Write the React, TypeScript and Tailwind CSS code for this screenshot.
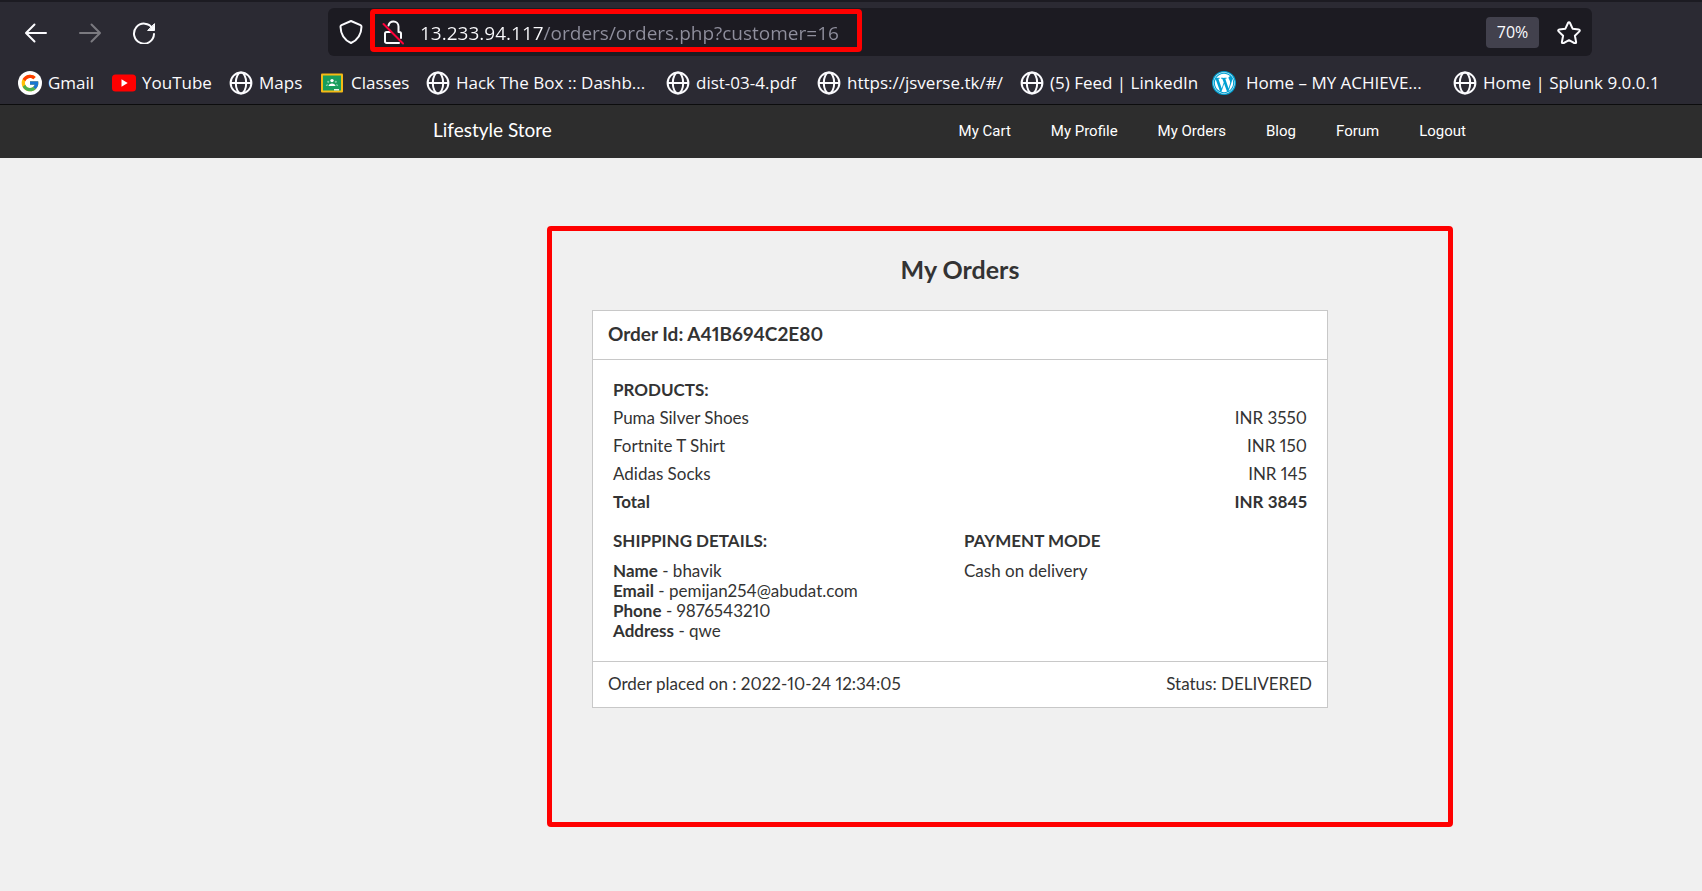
import type { ReactNode } from "react";
import { FcGoogle } from "react-icons/fc";
import { FaWordpress } from "react-icons/fa";

function Globe() {
  return (
    <svg viewBox="0 0 24 24" className="size-6 shrink-0" fill="none" stroke="#fbfbfe" strokeWidth="2" aria-hidden="true">
      <circle cx="12" cy="12" r="10.4" />
      <ellipse cx="12" cy="12" rx="5.2" ry="10.4" />
      <path d="M1.6 12h20.8" />
    </svg>
  );
}

function Gmail() {
  return (
    <span className="flex size-6 shrink-0 items-center justify-center rounded-full bg-white">
      <FcGoogle className="size-5" />
    </span>
  );
}

function YouTube() {
  return (
    <svg viewBox="0 0 24 24" className="size-6 shrink-0" aria-hidden="true">
      <rect x="0" y="3.5" width="24" height="17" rx="3.5" fill="#f00" />
      <path d="M9.5 8.3v7.4l6.2-3.7z" fill="#fff" />
    </svg>
  );
}

function Classroom() {
  return (
    <svg viewBox="1 0 24 24" className="size-6 shrink-0" aria-hidden="true">
      <rect x="1" y="2.5" width="22" height="19" rx="1" fill="#f5ba15" />
      <rect x="3" y="4.5" width="18" height="15" fill="#189d5c" />
      <circle cx="12" cy="9.6" r="1.7" fill="#fff" />
      <circle cx="8.2" cy="10.8" r="1.1" fill="#7dcda5" />
      <circle cx="15.8" cy="10.8" r="1.1" fill="#7dcda5" />
      <path d="M8.5 15c0-1.800 1.800-2.600 3.500-2.600s3.500.8 3.500 2.600z" fill="#fff" />
      <path d="M5.800 15c0-1.300 1-2 2.200-2l-.6 2zM18.200 15c0-1.300-1-2-2.200-2l.6 2z" fill="#7dcda5" />
      <rect x="14" y="18" width="5" height="1.500" fill="#e8f5ee" />
    </svg>
  );
}

function WordPress() {
  return (
    <span className="mr-1 flex size-6 shrink-0 items-center justify-center rounded-full bg-[#00a0d2]">
      <FaWordpress className="size-[22px] text-white" />
    </span>
  );
}

const bookmarks: { label: string; icon: ReactNode }[] = [
  { label: "Gmail", icon: <Gmail /> },
  { label: "YouTube", icon: <YouTube /> },
  { label: "Maps", icon: <Globe /> },
  { label: "Classes", icon: <Classroom /> },
  { label: "Hack The Box :: Dashb...", icon: <Globe /> },
  { label: "dist-03-4.pdf", icon: <Globe /> },
  { label: "https://jsverse.tk/#/", icon: <Globe /> },
  { label: "(5) Feed | LinkedIn", icon: <Globe /> },
  { label: "Home – MY ACHIEVE...", icon: <WordPress /> },
  { label: "Home | Splunk 9.0.0.1", icon: <Globe /> },
];

const navLinks = ["My Cart", "My Profile", "My Orders", "Blog", "Forum", "Logout"];

const products = [
  { name: "Puma Silver Shoes", price: "INR 3550" },
  { name: "Fortnite T Shirt", price: "INR 150" },
  { name: "Adidas Socks", price: "INR 145" },
];

const shipping = [
  { label: "Name", value: "bhavik" },
  { label: "Email", value: "pemijan254@abudat.com" },
  { label: "Phone", value: "9876543210" },
  { label: "Address", value: "qwe" },
];

function Toolbar() {
  return (
    <div className="flex items-center pt-1.5">
      <div className="flex w-[328px] shrink-0 items-center gap-[30px] pl-6">
        <button type="button" aria-label="Back" className="text-[#fbfbfe]">
          <svg viewBox="0 0 24 24" className="size-6" fill="none" stroke="currentColor" strokeWidth="2" strokeLinecap="round" strokeLinejoin="round">
            <path d="M22 13H2.500M10.500 4.500L2 13l8.500 8.500" />
          </svg>
        </button>
        <button type="button" aria-label="Forward" className="text-[#7b7a80]">
          <svg viewBox="0 0 24 24" className="size-6" fill="none" stroke="currentColor" strokeWidth="2" strokeLinecap="round" strokeLinejoin="round">
            <path d="M2 13h19.500M13.500 4.500L22 13l-8.500 8.500" />
          </svg>
        </button>
        <button type="button" aria-label="Reload" className="text-[#fbfbfe]">
          <svg viewBox="0 -1 24 24" className="size-6" fill="none" stroke="currentColor" strokeWidth="2" strokeLinecap="round">
            <path d="M20.600 7.500A10 10 0 1 0 22 13" />
            <path d="M22.500 3v6.500H16z" fill="currentColor" strokeWidth="1" strokeLinejoin="round" />
          </svg>
        </button>
      </div>
      <div className="mr-[110px] flex h-12 min-w-0 flex-1 items-center rounded-md bg-[#1c1b22] pr-[11px] pl-[11px]">
        <svg viewBox="0 0 24 24" className="size-6 shrink-0" fill="none" stroke="#fbfbfe" strokeWidth="2" strokeLinejoin="round" aria-hidden="true">
          <path d="M12 1l9.500 4.200c.6.300 1 .8 1 1.500C22.300 14 19 19.800 12 23 5 19.800 1.700 14 1.500 6.700c0-.7.4-1.200 1-1.500z" />
        </svg>
        <div className="mr-auto mb-[3px] ml-[7px] flex h-[43px] w-[492px] min-w-0 items-center rounded-sm border-[5px] border-[#f00] pl-[7px]">
          <svg viewBox="0 -1 24 24" className="size-6 shrink-0 overflow-visible" fill="none" stroke="#fbfbfe" strokeWidth="2" strokeLinecap="round" strokeLinejoin="round" aria-hidden="true">
            <path d="M6.500 5.500C7 3.200 9 1.500 11.500 1.500c2.800 0 5 2.200 5 5V12h.8c1 0 1.700.6 1.700 1.600V18M17 23H4.700c-1 0-1.700-.6-1.700-1.600v-7.800c0-1 .7-1.600 1.700-1.600H8" />
            <path d="M1.500 4L21 23.500" stroke="#ff0039" />
          </svg>
          <input
            type="text"
            aria-label="Address"
            defaultValue="13.233.94.117/orders/orders.php?customer=16"
            className="ml-3.5 min-w-0 flex-1 bg-[linear-gradient(90deg,#fbfbfe_123px,#8f8f9d_123px)] bg-clip-text pt-1 text-[19px] leading-7 text-transparent outline-none"
          />
        </div>
        <button type="button" className="mr-[18px] h-[31px] w-[53px] shrink-0 rounded bg-[#42414d] text-[16px] text-[#fbfbfe]">
          70%
        </button>
        <button type="button" aria-label="Bookmark this page" className="shrink-0">
          <svg viewBox="0 -1 24 24" className="size-6" fill="none" stroke="#fbfbfe" strokeWidth="2" strokeLinejoin="round">
            <path d="M12 1.300c.5 0 .8.300 1 .7l2.600 5.700 6.200.8c1 .1 1.300 1.200.6 1.900L17.900 14.700l1.200 6.300c.2 1-.8 1.700-1.600 1.200L12 19.200l-5.500 3c-.8.5-1.800-.2-1.600-1.200l1.200-6.300L1.600 10.400c-.7-.7-.4-1.800.6-1.900l6.200-.8L11 2c.2-.4.5-.7 1-.7z" />
          </svg>
        </button>
      </div>
    </div>
  );
}

export default function App() {
  return (
    <div className="min-h-screen overflow-x-hidden bg-[#f0f0f0] font-['Lato',sans-serif] text-[#333]">
      <header className="h-[105px] border-t-2 border-b border-t-[#1c1b22] border-b-[#0c0c0d] bg-[#2b2a33] font-['Open_Sans',sans-serif]">
        <Toolbar />
        <nav aria-label="Bookmarks" className="mt-[15px] grid grid-cols-[94px_117px_92px_105px_240px_151px_203px_192px_241px_auto] pl-[18px]">
          {bookmarks.map((b) => (
            <a key={b.label} href="#" className="flex items-center gap-1.5 text-[17px] leading-6 whitespace-nowrap text-[#fbfbfe]">
              {b.icon}
              {b.label}
            </a>
          ))}
        </nav>
      </header>

      <nav aria-label="Main" className="bg-[#2d2d2d] px-6 text-white xl:pl-[433px]">
        <div className="flex h-[53px] max-w-[1033px] items-center justify-between">
          <a href="#" className="pb-0.5 text-[19px]">Lifestyle Store</a>
          <ul className="flex gap-10 font-['Roboto',sans-serif] text-[15px]">
            {navLinks.map((l) => (
              <li key={l}>
                <a href="#">{l}</a>
              </li>
            ))}
          </ul>
        </div>
      </nav>

      <main className="px-6 pt-[68px] pb-16 xl:pl-[547px]">
        <section className="max-w-[906px] rounded-sm border-[5px] border-[#f00] pt-[23px] pr-[120px] pb-[114px] pl-10">
          <h1 className="text-center text-[25px] leading-[30px] font-bold">My Orders</h1>
          <article className="mt-[26px] border border-[#c8c8c8] bg-white text-[17px] proportional-nums">
            <h2 className="border-b border-[#c8c8c8] px-[15px] pb-0.5 text-[19px] leading-[46px] font-bold">Order Id: A41B694C2E80</h2>
            <div className="px-5 pt-4 pb-5">
              <table className="w-full leading-7">
                <thead>
                  <tr>
                    <th colSpan={2} className="p-0 text-left font-bold">PRODUCTS:</th>
                  </tr>
                </thead>
                <tbody>
                  {products.map((p) => (
                    <tr key={p.name}>
                      <td className="p-0">{p.name}</td>
                      <td className="p-0 text-right">{p.price}</td>
                    </tr>
                  ))}
                  <tr className="font-bold">
                    <td className="p-0">Total</td>
                    <td className="p-0 text-right">INR 3845</td>
                  </tr>
                </tbody>
              </table>
              <div className="mt-[11px] grid grid-cols-2 gap-2">
                <div>
                  <h3 className="mb-1.5 leading-7 font-bold">SHIPPING DETAILS:</h3>
                  {shipping.map((s) => (
                    <p key={s.label} className="leading-5">
                      <b>{s.label}</b> - {s.value}
                    </p>
                  ))}
                </div>
                <div>
                  <h3 className="mb-1.5 leading-7 font-bold">PAYMENT MODE</h3>
                  <p className="leading-5">Cash on delivery</p>
                </div>
              </div>
            </div>
            <footer className="flex justify-between border-t border-[#c8c8c8] px-[15px] pb-px leading-[44px]">
              <span>Order placed on : 2022-10-24 12:34:05</span>
              <span>Status: DELIVERED</span>
            </footer>
          </article>
        </section>
      </main>
    </div>
  );
}
